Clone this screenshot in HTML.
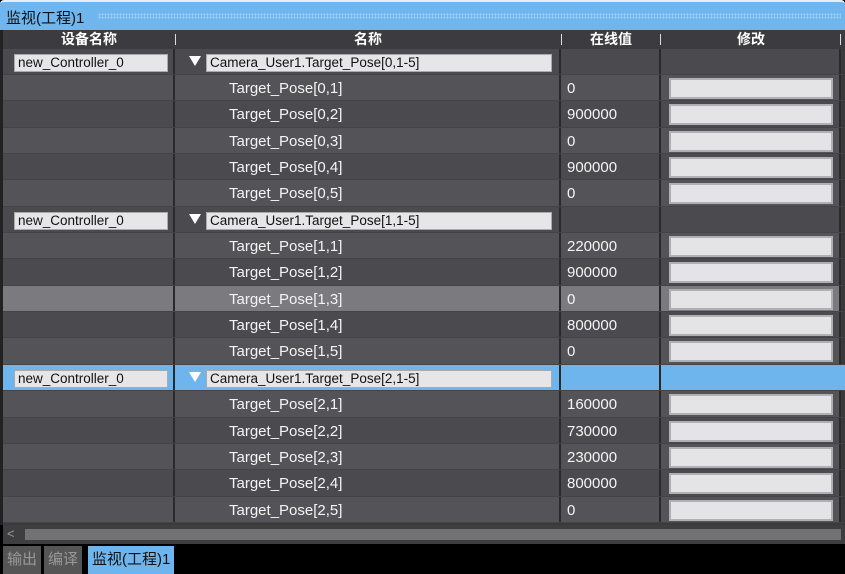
<!DOCTYPE html><html><head><meta charset="utf-8"><style>
*{margin:0;padding:0;box-sizing:border-box}
body{width:845px;height:574px;background:#000;font-family:"Liberation Sans","Noto Sans CJK SC",sans-serif;font-size:14px;color:#fff;position:relative;overflow:hidden}
#title{position:absolute;left:0;top:0;width:845px;height:30px;background:#6fb6ee;border-top:2px solid #e8eef4;border-radius:4px 4px 0 0}
#title span{position:absolute;left:6px;top:5px;font-size:15px;color:#111}
#title .dots{position:absolute;left:98px;right:4px;top:11px;height:6px;background-image:radial-gradient(circle,#a7d3f5 0.8px,transparent 1px);background-size:3px 3px}
#grid{position:absolute;left:0;top:30px;width:845px;height:495px;background:#3a3a3c;border-left:3px solid #222}
.hdr{position:absolute;top:0;height:18.5px;width:842px;background:#3c3c40;font-weight:bold;font-size:14px}
.hdr div{position:absolute;top:0;text-align:center;line-height:18px}
.sep{position:absolute;top:4px;width:1px;height:11px;background:#ddd}
.row{position:absolute;left:0;width:842px;height:26.36px;border-bottom:1px solid #444448}
.c{position:absolute;top:0;height:100%;border-right:2px solid #2a2a2c}
.c1{left:0;width:172px}.c2{left:172px;width:386px}.c3{left:558px;width:100px}.c4{left:658px;width:180px}
.a{background:#545458}.b{background:#4b4b4f}.g{background:#7b7b7f}.bl{background:#6eb5ee}
.box{position:absolute;background:#e6e6e8;border:1px solid #aaa;color:#111;font-size:13.5px;line-height:16px;padding-left:3px;white-space:nowrap}
.vbox{position:absolute;left:8px;top:3px;width:164px;height:21px;background:#e4e4e6;border:2px solid #b0b0b4}
.t{position:absolute;left:54px;top:5px;font-size:15px;color:#f4f4f4}
.v{position:absolute;left:6px;top:5px;font-size:15px;color:#f4f4f4}
.tri{position:absolute;left:14px;top:7px;width:0;height:0;border-left:6px solid transparent;border-right:6px solid transparent;border-top:10px solid #fff}
#scroll{position:absolute;left:3px;top:525px;width:842px;height:19px;background:#3e3e40}
#scroll .th{position:absolute;left:22px;right:4px;top:4px;height:11px;background:#727274}
#scroll .ar{position:absolute;left:4px;top:1px;color:#999;font-size:13px}
.tab{position:absolute;top:546px;height:28px;line-height:28px;font-size:15px;padding:0 4px;color:#999;background:#555}
</style></head><body>
<div id="title"><span>监视(工程)1</span><div class="dots"></div></div>
<div id="grid">
<div class="hdr">
<div style="left:0;width:172px">设备名称</div><div style="left:172px;width:386px">名称</div><div style="left:558px;width:100px">在线值</div><div style="left:658px;width:180px">修改</div>
<span class="sep" style="left:172px"></span><span class="sep" style="left:558px"></span><span class="sep" style="left:657px"></span><span class="sep" style="left:837px"></span>
</div>
<div id="rows"></div>
</div>
<div id="scroll"><span class="ar">&lt;</span><div class="th"></div></div>
<div class="tab" style="left:3px">输出</div>
<div class="tab" style="left:44px">编译</div>
<div class="tab" style="left:88px;background:#6eb5ee;color:#111">监视(工程)1</div>
<script></script>
<div style="display:none"></div>
<div id="r" style="position:absolute;left:3px;top:48.5px;width:842px">
<!-- group 0 -->
<div class="row" style="top:0"><div class="c c1 b"><div class="box" style="left:11px;top:5px;width:154px;height:18px">new_Controller_0</div></div><div class="c c2 b"><div class="tri"></div><div class="box" style="left:31px;top:5px;width:346px;height:18px">Camera_User1.Target_Pose[0,1-5]</div></div><div class="c c3 b"></div><div class="c c4 b"></div></div>
<div class="row" style="top:26.36px"><div class="c c1 a"></div><div class="c c2 a"><span class="t">Target_Pose[0,1]</span></div><div class="c c3 a"><span class="v">0</span></div><div class="c c4 a"><div class="vbox"></div></div></div>
<div class="row" style="top:52.72px"><div class="c c1 b"></div><div class="c c2 b"><span class="t">Target_Pose[0,2]</span></div><div class="c c3 b"><span class="v">900000</span></div><div class="c c4 b"><div class="vbox"></div></div></div>
<div class="row" style="top:79.08px"><div class="c c1 a"></div><div class="c c2 a"><span class="t">Target_Pose[0,3]</span></div><div class="c c3 a"><span class="v">0</span></div><div class="c c4 a"><div class="vbox"></div></div></div>
<div class="row" style="top:105.44px"><div class="c c1 b"></div><div class="c c2 b"><span class="t">Target_Pose[0,4]</span></div><div class="c c3 b"><span class="v">900000</span></div><div class="c c4 b"><div class="vbox"></div></div></div>
<div class="row" style="top:131.8px"><div class="c c1 a"></div><div class="c c2 a"><span class="t">Target_Pose[0,5]</span></div><div class="c c3 a"><span class="v">0</span></div><div class="c c4 a"><div class="vbox"></div></div></div>
<!-- group 1 -->
<div class="row" style="top:158.16px"><div class="c c1 b"><div class="box" style="left:11px;top:5px;width:154px;height:18px">new_Controller_0</div></div><div class="c c2 b"><div class="tri"></div><div class="box" style="left:31px;top:5px;width:346px;height:18px">Camera_User1.Target_Pose[1,1-5]</div></div><div class="c c3 b"></div><div class="c c4 b"></div></div>
<div class="row" style="top:184.52px"><div class="c c1 a"></div><div class="c c2 a"><span class="t">Target_Pose[1,1]</span></div><div class="c c3 a"><span class="v">220000</span></div><div class="c c4 a"><div class="vbox"></div></div></div>
<div class="row" style="top:210.88px"><div class="c c1 b"></div><div class="c c2 b"><span class="t">Target_Pose[1,2]</span></div><div class="c c3 b"><span class="v">900000</span></div><div class="c c4 b"><div class="vbox"></div></div></div>
<div class="row" style="top:237.24px"><div class="c c1 g"></div><div class="c c2 g"><span class="t">Target_Pose[1,3]</span></div><div class="c c3 g"><span class="v">0</span></div><div class="c c4 g"><div class="vbox"></div></div></div>
<div class="row" style="top:263.6px"><div class="c c1 b"></div><div class="c c2 b"><span class="t">Target_Pose[1,4]</span></div><div class="c c3 b"><span class="v">800000</span></div><div class="c c4 b"><div class="vbox"></div></div></div>
<div class="row" style="top:289.96px"><div class="c c1 a"></div><div class="c c2 a"><span class="t">Target_Pose[1,5]</span></div><div class="c c3 a"><span class="v">0</span></div><div class="c c4 a"><div class="vbox"></div></div></div>
<!-- group 2 -->
<div class="row bl" style="top:316.32px"><div class="c c1 bl"><div class="box" style="left:11px;top:5px;width:154px;height:18px">new_Controller_0</div></div><div class="c c2 bl"><div class="tri"></div><div class="box" style="left:31px;top:5px;width:346px;height:18px">Camera_User1.Target_Pose[2,1-5]</div></div><div class="c c3 bl"></div><div class="c c4 bl" style="border-right:none;width:184px"></div></div>
<div class="row" style="top:342.68px"><div class="c c1 a"></div><div class="c c2 a"><span class="t">Target_Pose[2,1]</span></div><div class="c c3 a"><span class="v">160000</span></div><div class="c c4 a"><div class="vbox"></div></div></div>
<div class="row" style="top:369.04px"><div class="c c1 b"></div><div class="c c2 b"><span class="t">Target_Pose[2,2]</span></div><div class="c c3 b"><span class="v">730000</span></div><div class="c c4 b"><div class="vbox"></div></div></div>
<div class="row" style="top:395.4px"><div class="c c1 a"></div><div class="c c2 a"><span class="t">Target_Pose[2,3]</span></div><div class="c c3 a"><span class="v">230000</span></div><div class="c c4 a"><div class="vbox"></div></div></div>
<div class="row" style="top:421.76px"><div class="c c1 b"></div><div class="c c2 b"><span class="t">Target_Pose[2,4]</span></div><div class="c c3 b"><span class="v">800000</span></div><div class="c c4 b"><div class="vbox"></div></div></div>
<div class="row" style="top:448.12px"><div class="c c1 a"></div><div class="c c2 a"><span class="t">Target_Pose[2,5]</span></div><div class="c c3 a"><span class="v">0</span></div><div class="c c4 a"><div class="vbox"></div></div></div>
</div>
</body></html>
